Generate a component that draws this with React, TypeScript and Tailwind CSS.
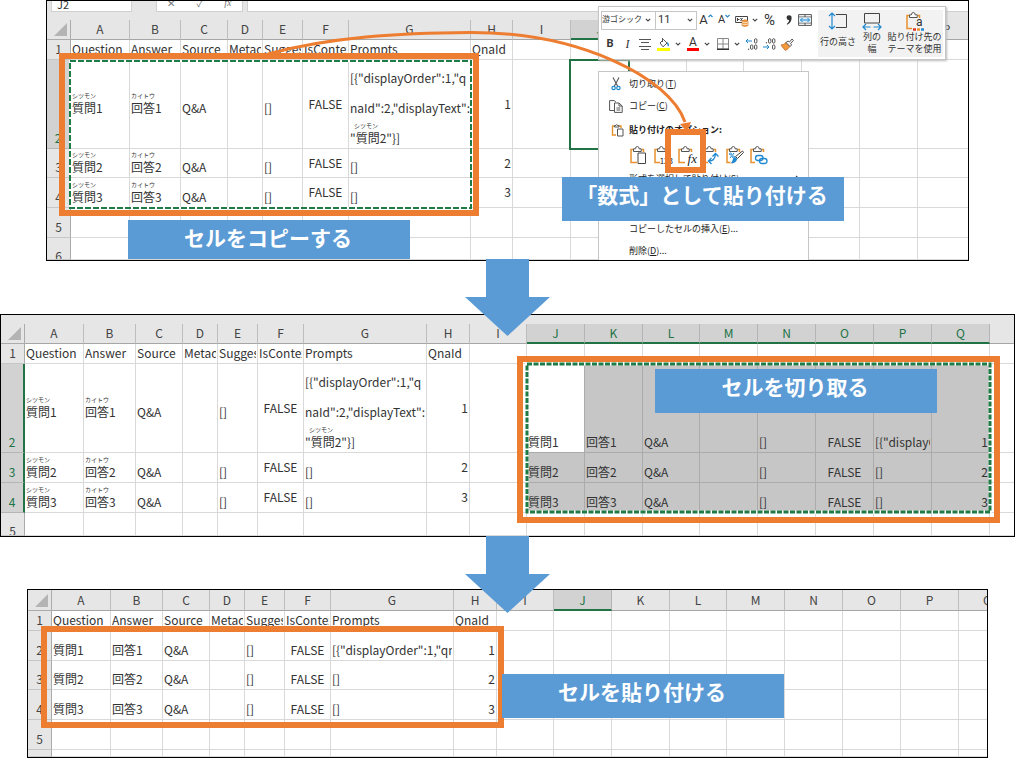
import type { ReactNode } from "react";

type Item = { t: string; ruby?: string; align?: "left" | "center" | "right"; phonetic?: boolean };
type Cell = Item | Item[] | undefined;
type Row = { n: number; h: number; cells: Cell[]; cut?: boolean };

const LETTERS = "ABCDEFGHIJKLMNOPQ".split("");

const TITLES: Item[] = ["Question", "Answer", "Source", "Metad", "Sugges", "IsContex", "Prompts", "QnaId"].map((t) => ({
  t,
}));

function phoneticCells(n: number): Cell[] {
  const prompts: Cell =
    n === 1
      ? [
          { t: '[{"displayOrder":1,"q', phonetic: true },
          { t: 'naId":2,"displayText":', phonetic: true },
          { t: '"質問2"}]', ruby: "シツモン", phonetic: true },
        ]
      : { t: "[]", phonetic: true };
  return [
    { t: `質問${n}`, ruby: "シツモン", phonetic: true },
    { t: `回答${n}`, ruby: "カイトウ", phonetic: true },
    { t: "Q&A", phonetic: true },
    undefined,
    { t: "[]", phonetic: true },
    { t: "FALSE", align: "center" },
    prompts,
    { t: String(n), align: "right" },
  ];
}

function plainCells(n: number, prompt: string): Cell[] {
  return [
    { t: `質問${n}` },
    { t: `回答${n}` },
    { t: "Q&A" },
    undefined,
    { t: "[]" },
    { t: "FALSE", align: "center" },
    { t: prompt },
    { t: String(n), align: "right" },
  ];
}

function Line({ item }: { item: Item }) {
  const side = item.align === "right" ? "text-right" : item.align === "center" ? "text-center" : "text-left";
  if (item.phonetic) {
    return (
      <div className="flex h-[30px] flex-col justify-center whitespace-nowrap">
        <span className={`h-2 text-[6px] leading-[8px] ${item.t.startsWith('"') ? "pl-1" : ""}`}>{item.ruby ?? ""}</span>
        <span className="leading-[16px]">{item.t}</span>
      </div>
    );
  }
  return <div className={`overflow-hidden pb-[2px] leading-[17px] whitespace-nowrap ${side}`}>{item.t}</div>;
}

type SheetProps = {
  label: string;
  widths: number[];
  headHeight: string;
  rows: Row[];
  selectedCols: string[];
  selectedRows: number[];
  highlight?: boolean;
};

function Sheet({ label, widths, headHeight, rows, selectedCols, selectedRows, highlight }: SheetProps) {
  return (
    <table aria-label={label} className="w-full table-fixed border-separate border-spacing-0 bg-white">
      <colgroup>
        {widths.map((w, i) => (
          <col key={i} style={{ width: w }} />
        ))}
        <col />
      </colgroup>
      <thead>
        <tr className={headHeight}>
          <th className="border-r border-b border-[#ababab] bg-[#e6e6e6] p-0 align-bottom">
            <svg viewBox="0 0 23 19" className="block h-[19px] w-[23px]" aria-hidden="true">
              <path d="M20 3V16H7Z" fill="#b4b4b4" />
            </svg>
          </th>
          {LETTERS.map((l) => (
            <th
              key={l}
              scope="col"
              className={
                selectedCols.includes(l)
                  ? "border-r border-b-2 border-r-[#b5b5b5] border-b-[#217346] bg-[#d2d2d2] p-0 align-bottom leading-[18px] font-normal text-[#217346]"
                  : "border-r border-b border-r-[#bdbdbd] border-b-[#a6a6a6] bg-[#e6e6e6] p-0 pb-px align-bottom leading-[18px] font-normal text-[#444]"
              }
            >
              {l}
            </th>
          ))}
          <th className="border-b border-[#a6a6a6] bg-[#e6e6e6] p-0" />
        </tr>
      </thead>
      <tbody>
        {rows.map((r) => {
          const sel = selectedRows.includes(r.n);
          return (
            <tr key={r.n} style={{ height: r.h }}>
              <th
                scope="row"
                className={
                  sel
                    ? "border-r-2 border-b border-r-[#217346] border-b-[#b5b5b5] bg-[#d2d2d2] p-0 align-bottom font-normal text-[#217346]"
                    : "border-r border-b border-r-[#ababab] border-b-[#c6c6c6] bg-[#e6e6e6] p-0 align-bottom font-normal text-[#444]"
                }
              >
                {r.cut ? (
                  <div className="overflow-hidden" style={{ height: r.h - 1 }}>
                    {r.h > 12 && <div className="pt-2 leading-[20px]">{r.n}</div>}
                  </div>
                ) : (
                  <div className="pb-[2px] leading-[17px]">{r.n}</div>
                )}
              </th>
              {LETTERS.map((l, i) => {
                const cell = r.cells[i];
                const list = cell ? (Array.isArray(cell) ? cell : [cell]) : [];
                const marked = highlight && sel && i >= 9;
                const shade = marked
                  ? l === "J" && r.n === 2
                    ? "bg-white border-[#ababab]"
                    : "bg-[#c6c6c6] border-[#ababab]"
                  : "border-[#d9d9d9]";
                const valign = sel || r.cells.some((c) => c && !Array.isArray(c) && c.phonetic);
                const pad = list[0]?.align === "center" ? "px-0" : "px-px";
                return (
                  <td
                    key={l}
                    className={`overflow-hidden border-r border-b py-0 ${pad} ${shade} ${valign && i < 9 ? "align-middle" : "align-bottom"}`}
                  >
                    <div className={list[0]?.phonetic ? "-my-1" : ""}>
                      {list.map((it, k) => (
                        <Line key={k} item={it} />
                      ))}
                    </div>
                  </td>
                );
              })}
              <td className="border-b border-[#d9d9d9] p-0" />
            </tr>
          );
        })}
      </tbody>
    </table>
  );
}

function Ants({ className, heavy }: { className: string; heavy?: boolean }) {
  return (
    <svg className={`absolute overflow-visible ${className}`} aria-hidden="true">
      <rect width="100%" height="100%" fill="none" stroke="#fff" strokeWidth={heavy ? 3 : 2} />
      <rect
        width="100%"
        height="100%"
        fill="none"
        stroke="#1e7b45"
        strokeWidth={heavy ? 3 : 2}
        strokeDasharray={heavy ? "5 1.5" : "6 2"}
      />
    </svg>
  );
}

function Caption({ className, children }: { className: string; children: ReactNode }) {
  return (
    <p
      className={`absolute w-[282px] bg-[#5b9bd5] pr-[2px] text-center text-[21px] leading-[35px] font-bold whitespace-nowrap text-white ${className}`}
    >
      {children}
    </p>
  );
}

function DownArrow({ className }: { className: string }) {
  return (
    <div className={`relative z-20 flex justify-center ${className}`}>
      <svg viewBox="0 0 85 77" className="block h-[77px] w-[85px]" aria-hidden="true">
        <path d="M21 0H64V38H85L42.5 77L0 38H21Z" fill="#5b9bd5" />
      </svg>
    </div>
  );
}

function Chevron() {
  return (
    <svg viewBox="0 0 6 4" className="h-1 w-[6px] shrink-0" aria-hidden="true">
      <path d="M.8.8L3 3L5.2.8" fill="none" stroke="#444" strokeWidth="1.1" />
    </svg>
  );
}

function Clipboard({ children }: { children?: ReactNode }) {
  return (
    <svg viewBox="0 0 20 20" className="block size-5" aria-hidden="true">
      <path d="M4 4.5H2V17.5H8M12.5 4.5H14.5V7" fill="none" stroke="#e8912d" strokeWidth="1.5" />
      <path d="M4.5 6.5V3.8H6.5Q6.5 1.5 8.3 1.5T10.1 3.8H12.2V6.5Z" fill="#fff" stroke="#555" strokeWidth="1" />
      {children}
    </svg>
  );
}

const toolButton = "flex h-5 items-center justify-center";

function MiniToolbar() {
  return (
    <div
      role="toolbar"
      aria-label="ミニ ツールバー"
      className="absolute top-[6px] left-[552px] z-10 flex h-[54px] w-[348px] border border-[#c6c6c6] bg-white pt-[3px] pr-[2px] pb-[2px] pl-[2px] font-['Roboto','Noto_Sans_CJK_JP',sans-serif] text-[#333] shadow-[1px_1px_2px_#bbb]"
    >
      <div className="flex w-[215px] flex-col gap-1">
        <div className="flex h-5 items-center">
          <div className="flex h-[19px] w-[55px] shrink-0 items-center border border-[#c6c6c6] pr-1">
            <select aria-label="フォント" className="min-w-0 flex-1 appearance-none bg-white text-[8px] outline-none">
              <option>游ゴシック</option>
            </select>
            <Chevron />
          </div>
          <div className="flex h-[19px] w-[41px] shrink-0 items-center border border-l-0 border-[#c6c6c6] pr-[3px] pl-[2px]">
            <select aria-label="フォント サイズ" className="min-w-0 flex-1 appearance-none bg-white text-[11px] outline-none">
              <option>11</option>
            </select>
            <Chevron />
          </div>
          <button aria-label="フォント サイズの拡大" className={`${toolButton} w-[18px] items-start text-[13px] leading-[20px]`}>
            A
            <svg viewBox="0 0 5 4" className="mt-1 h-1 w-[5px]" aria-hidden="true">
              <path d="M.5 3L2.5 1L4.5 3" fill="none" stroke="#2b88c8" strokeWidth="1.2" />
            </svg>
          </button>
          <button aria-label="フォント サイズの縮小" className={`${toolButton} w-[18px] text-[11px] leading-[20px]`}>
            A
            <svg viewBox="0 0 5 4" className="mb-2 h-1 w-[5px]" aria-hidden="true">
              <path d="M.5 1L2.5 3L4.5 1" fill="none" stroke="#2b88c8" strokeWidth="1.2" />
            </svg>
          </button>
          <button aria-label="通貨表示形式" className={`${toolButton} w-[26px] gap-[3px]`}>
            <svg viewBox="0 0 14 13" className="h-[13px] w-[14px] shrink-0" aria-hidden="true">
              <path d="M.6 2.5H12.5V8.5H.6Z" fill="#fff" stroke="#444" />
              <path d="M2.5 4V7M2.5 5.5H4.5M5.5 4L7.5 7M7.5 4L5.5 7" stroke="#444" />
              <path d="M7 7Q10 4.5 13 7V11.5Q10 13.5 7 11.5Z" fill="#f09a3e" stroke="#d9782d" strokeWidth=".7" />
              <path d="M7 8Q10 9.6 13 8M7 10Q10 11.6 13 10" fill="none" stroke="#fff" strokeWidth=".7" />
            </svg>
            <Chevron />
          </button>
          <button aria-label="パーセント スタイル" className={`${toolButton} w-[21px] text-[15px]`}>
            %
          </button>
          <button aria-label="桁区切りスタイル" className={`${toolButton} w-[17px]`}>
            <svg viewBox="0 0 8 12" className="h-3 w-2" aria-hidden="true">
              <path d="M4 1.2A2.6 2.6 0 0 1 6.6 4Q6.6 8.5 2.2 10.7L1.8 10Q4.2 8 4.2 6.2A2.5 2.5 0 1 1 4 1.2Z" fill="#333" />
            </svg>
          </button>
          <button aria-label="セルを結合して中央揃え" className={`${toolButton} w-[16px]`}>
            <svg viewBox="0 0 14 12" className="h-3 w-[14px]" aria-hidden="true">
              <path d="M.6.6H13.4V11.4H.6ZM.6 3H13.4M.6 9H13.4M7 .6V3M7 9V11.4" fill="none" stroke="#555" />
              <path d="M1.2 3.5H12.8V8.5H1.2Z" fill="#dceefa" />
              <path d="M2.5 6H11.5M4.5 4L2.5 6L4.5 8M9.5 4L11.5 6L9.5 8" fill="none" stroke="#1e88d0" />
            </svg>
          </button>
        </div>
        <div className="flex h-5 items-center">
          <button className={`${toolButton} w-[18px] text-[11px] font-bold`}>B</button>
          <button className={`${toolButton} w-[17px] font-['Liberation_Serif',serif] text-[12px] italic`}>I</button>
          <button aria-label="中央揃え" className={`${toolButton} w-[18px]`}>
            <svg viewBox="0 0 12 11" className="h-[11px] w-3" aria-hidden="true">
              <path d="M0 .5H12M2 3.5H10M0 7.5H12M2 10.5H10" stroke="#555" />
            </svg>
          </button>
          <button aria-label="塗りつぶしの色" className={`${toolButton} w-[30px] gap-[5px]`}>
            <svg viewBox="0 0 13 13" className="size-[13px] shrink-0" aria-hidden="true">
              <path d="M3 5L6.5 1.5L10 5L6 8.8Z" fill="#fff" stroke="#555" />
              <path d="M5.5 0V4" stroke="#555" />
              <path d="M10 4Q13 6 11.5 8.5Q10 8 10 4" fill="#2b88c8" />
              <path d="M0 10H13V13H0Z" fill="#ff0" />
            </svg>
            <Chevron />
          </button>
          <button aria-label="フォントの色" className={`${toolButton} w-[29px] gap-[5px]`}>
            <span className="border-b-3 border-[#f00] px-[2px] text-[12px] leading-[11px]">A</span>
            <Chevron />
          </button>
          <button aria-label="罫線" className={`${toolButton} w-[30px] gap-[5px]`}>
            <svg viewBox="0 0 12 12" className="size-3 shrink-0" aria-hidden="true">
              <path d="M.5.5H11.5V11H.5ZM6 .5V11M.5 6H11.5" fill="none" stroke="#888" />
              <path d="M0 11.3H12" stroke="#333" strokeWidth="1.4" />
            </svg>
            <Chevron />
          </button>
          <button aria-label="小数点以下の表示桁数を増やす" className={`${toolButton} w-[17px]`}>
            <svg viewBox="0 0 13 12" className="h-3 w-[13px]" aria-hidden="true">
              <path d="M1 3H7M3 1L1 3L3 5" fill="none" stroke="#1e88d0" />
              <rect x="9.5" y=".7" width="2.4" height="4.4" rx="1.2" fill="none" stroke="#555" />
              <rect x="5.5" y="6.9" width="2.4" height="4.4" rx="1.2" fill="none" stroke="#555" />
              <rect x="9.5" y="6.9" width="2.4" height="4.4" rx="1.2" fill="none" stroke="#555" />
              <circle cx="3.6" cy="11.2" r=".7" fill="#555" />
            </svg>
          </button>
          <button aria-label="小数点以下の表示桁数を減らす" className={`${toolButton} w-[18px]`}>
            <svg viewBox="0 0 13 12" className="h-3 w-[13px]" aria-hidden="true">
              <path d="M0 9H6M4 7L6 9L4 11" fill="none" stroke="#1e88d0" />
              <rect x="5.5" y=".7" width="2.4" height="4.4" rx="1.2" fill="none" stroke="#555" />
              <rect x="9.5" y=".7" width="2.4" height="4.4" rx="1.2" fill="none" stroke="#555" />
              <rect x="9.5" y="6.9" width="2.4" height="4.4" rx="1.2" fill="none" stroke="#555" />
              <circle cx="3.4" cy="4.8" r=".7" fill="#555" />
            </svg>
          </button>
          <button aria-label="書式のコピー/貼り付け" className={`${toolButton} w-[18px]`}>
            <svg viewBox="0 0 14 13" className="h-[13px] w-[14px]" aria-hidden="true">
              <path d="M1 7Q4 7 6 4.5L10 8.5Q8 11 5.5 12.5Q4 11.5 1 7Z" fill="#f09a3e" stroke="#c8641e" strokeWidth=".8" />
              <path d="M6 4.5L8 3L9.5 4L12 1L13.4 2.4L10.7 5.5L11.5 7L10 8.5Z" fill="#fff" stroke="#444" strokeWidth=".9" />
            </svg>
          </button>
        </div>
      </div>
      <div className="ml-[2px] flex flex-1 bg-[#f2f2f2] text-[9px] leading-[12px]">
        <button className="flex w-[40px] flex-col items-center pt-px whitespace-nowrap">
          <svg viewBox="0 0 20 20" className="block size-5 shrink-0" aria-hidden="true">
            <path d="M4 2V18M1 5L4 2L7 5M1 15L4 18L7 15" fill="none" stroke="#1e88d0" strokeWidth="1.2" />
            <path d="M8 3.5H18.5V16.5H8" fill="none" stroke="#444" />
          </svg>
          <span className="pt-[5px]">行の高さ</span>
        </button>
        <button className="flex w-[28px] flex-col items-center pt-px">
          <svg viewBox="0 0 20 20" className="block size-5 shrink-0" aria-hidden="true">
            <path d="M2.5 12V2.5H17.5V12Z" fill="none" stroke="#444" />
            <path d="M1 16H19M4 13L1 16L4 19M16 13L19 16L16 19" fill="none" stroke="#1e88d0" strokeWidth="1.2" />
            <path d="M8.5 16H11.5" stroke="#f2f2f2" strokeWidth="2" />
          </svg>
          <span>列の</span>
          <span>幅</span>
        </button>
        <button className="flex flex-1 flex-col items-center pt-px whitespace-nowrap">
          <span className="relative block size-5 shrink-0">
            <Clipboard>
              <path d="M7 8H19V19H7Z" fill="#f2f2f2" />
              <path d="M8 18.5H11" stroke="#e03020" strokeWidth="2.4" />
              <path d="M12 18.5H15" stroke="#e8912d" strokeWidth="2.4" />
              <path d="M16 18.5H19" stroke="#1e88d0" strokeWidth="2.4" />
            </Clipboard>
            <span className="absolute top-[5px] right-[2px] text-[12px]">a</span>
          </span>
          <span>貼り付け先の</span>
          <span>テーマを使用</span>
        </button>
      </div>
    </div>
  );
}

const menuItem = "flex h-[22px] w-full shrink-0 items-center text-left whitespace-nowrap";

function ContextMenu() {
  return (
    <div
      role="menu"
      aria-label="セルのメニュー"
      className="absolute top-[71px] left-[552px] flex h-[189px] w-[211px] flex-col overflow-hidden border border-b-0 border-[#c6c6c6] bg-white pt-px text-[9px] text-[#222]"
    >
      <button role="menuitem" className={menuItem}>
        <span className="flex w-[30px] justify-center">
          <svg viewBox="0 0 10 14" className="ml-1 h-[14px] w-[10px]" aria-hidden="true">
            <path d="M2 .5L6.8 9.5M8 .5L3.2 9.5" stroke="#555" strokeWidth="1.1" />
            <circle cx="2.6" cy="11" r="1.7" fill="none" stroke="#1e88d0" strokeWidth="1.2" />
            <circle cx="7.4" cy="11" r="1.7" fill="none" stroke="#1e88d0" strokeWidth="1.2" />
          </svg>
        </span>
        切り取り(<u>T</u>)
      </button>
      <button role="menuitem" className={menuItem}>
        <span className="flex w-[30px] justify-center">
          <svg viewBox="0 0 14 13" className="ml-1 h-[13px] w-[14px]" aria-hidden="true">
            <path d="M5 10.5H.6V.6H5.2L7 2.2" fill="none" stroke="#555" />
            <path d="M5.5 3H10L13.2 6V12.4H5.5ZM10 3V6H13.2M7.5 8H11.3M7.5 10H11.3" fill="none" stroke="#555" />
          </svg>
        </span>
        コピー(<u>C</u>)
      </button>
      <div className="flex h-[25px] shrink-0 items-center font-bold whitespace-nowrap">
        <span className="flex w-[30px] justify-center">
          <svg viewBox="0 0 14 14" className="ml-2 size-[14px]" aria-hidden="true">
            <path d="M3.5 3H1.5V12H5M8 3H10V5" fill="none" stroke="#e8912d" strokeWidth="1.4" />
            <path d="M3.5 4V2.5H5Q5.8 .4 6.6 2.5H8V4Z" fill="#fff" stroke="#555" />
            <path d="M6.5 6H12V13H6.5Z" fill="#fff" stroke="#555" />
          </svg>
        </span>
        貼り付けのオプション:
      </div>
      <div className="flex h-[26px] shrink-0 items-center gap-1 pl-[30px]">
        <button role="menuitem" aria-label="貼り付け">
          <Clipboard>
            <path d="M9 8H16.5V18.5H9Z" fill="#fff" stroke="#444" />
          </Clipboard>
        </button>
        <button role="menuitem" aria-label="値" className="relative">
          <Clipboard />
          <span className="absolute right-0 bottom-0 bg-white text-[8px] leading-[9px]">123</span>
        </button>
        <button role="menuitem" aria-label="数式" className="relative">
          <Clipboard />
          <span className="absolute right-0 bottom-0 bg-white font-['Liberation_Serif',serif] text-[13px] leading-[13px] italic">
            fx
          </span>
        </button>
        <button role="menuitem" aria-label="行/列の入れ替え">
          <Clipboard>
            <path d="M7 16H14V9" fill="none" stroke="#fff" strokeWidth="5" />
            <path d="M8 16Q14 16 14.5 9M11.5 11.5L14.5 8.5L17.5 11.5M10.5 13L7.5 16L10.5 19" fill="none" stroke="#1e88d0" strokeWidth="1.3" />
          </Clipboard>
        </button>
        <button role="menuitem" aria-label="書式設定">
          <Clipboard>
            <path d="M5 18L10 11L18 5L19 7L13 14Q10 19 5 18Z" fill="#fff" />
            <path d="M17.5 6L10.5 11.5L12.5 13.5L18.5 7.5Z" fill="#fff" stroke="#444" />
            <path d="M10 12Q7.5 13 7.5 15.5Q7 17.5 5.5 18Q10 19.5 12.3 14Z" fill="#1e88d0" />
            <circle cx="5.5" cy="9" r="1" fill="none" stroke="#1e88d0" />
            <circle cx="8.5" cy="12" r="1" fill="none" stroke="#1e88d0" />
            <path d="M9 8L5 13" stroke="#1e88d0" />
          </Clipboard>
        </button>
        <button role="menuitem" aria-label="リンク貼り付け">
          <Clipboard>
            <path d="M6 10H19V19H6Z" fill="#fff" />
            <rect x="6.5" y="10.5" width="7.5" height="5" rx="2.5" fill="none" stroke="#1e88d0" strokeWidth="1.3" />
            <rect x="10.5" y="13.5" width="7.5" height="5" rx="2.5" fill="none" stroke="#1e88d0" strokeWidth="1.3" />
          </Clipboard>
        </button>
      </div>
      <button role="menuitem" className={`${menuItem} justify-between pr-2 pl-[30px]`}>
        <span>
          形式を選択して貼り付け(<u>S</u>)
        </span>
        <svg viewBox="0 0 5 8" className="h-2 w-[5px]" aria-hidden="true">
          <path d="M1 1L4 4L1 7" fill="none" stroke="#444" strokeWidth="1.2" />
        </svg>
      </button>
      <button role="menuitem" className={`${menuItem} mt-7 pl-[30px]`}>
        コピーしたセルの挿入(<u>E</u>)...
      </button>
      <button role="menuitem" className={`${menuItem} pl-[30px]`}>
        削除(<u>D</u>)...
      </button>
    </div>
  );
}

const WIDE = [58, 58, 57, 58, 58, 58, 58, 58];

export default function App() {
  return (
    <main className="min-h-screen overflow-hidden bg-white font-['Noto_Sans_CJK_JP',sans-serif] text-[12px] text-[#333]">
      <section className="relative mx-[46px]">
        <div className="overflow-hidden border border-black">
          <div className="flex h-[11px] overflow-hidden bg-[#e6e6e6] pl-1">
            <input
              aria-label="名前ボックス"
              defaultValue="J2"
              className="h-[11px] w-[81px] border-x border-b border-[#d0d0d0] bg-white px-[5px] pb-1 text-[11px] leading-[8px] outline-none"
            />
            <div className="ml-6 flex w-[87px] justify-around border-x border-b border-[#d0d0d0] bg-white text-[10px] leading-[4px] text-[#777]">
              <span>✕</span>
              <span>✓</span>
              <i className="font-['Liberation_Serif',serif]">fx</i>
            </div>
            <div className="ml-1 flex-1 border-b border-l border-[#d0d0d0] bg-white" />
          </div>
          <div className="h-2 bg-[#e6e6e6]" />
          <Sheet
            label="コピー元のシート"
            widths={[24, 59, 51, 47, 35, 40, 46, 122, 42, 58, ...WIDE]}
            headHeight="h-5"
            selectedCols={["J"]}
            selectedRows={[2]}
            rows={[
              { n: 1, h: 20, cells: TITLES },
              { n: 2, h: 89, cells: phoneticCells(1) },
              { n: 3, h: 29, cells: phoneticCells(2) },
              { n: 4, h: 30, cells: phoneticCells(3) },
              { n: 5, h: 30, cells: [] },
              { n: 6, h: 22, cells: [], cut: true },
            ]}
          />
        </div>
        <div className="absolute top-[59px] left-[523px] h-[91px] w-[61px] border-2 border-[#217346]" />
        <Ants className="top-[61px] left-[24px] h-[147px] w-[401px]" />
        <ContextMenu />
        <MiniToolbar />
        <svg viewBox="0 0 700 140" className="pointer-events-none absolute top-0 left-0 z-10 h-[140px] w-[700px]" aria-hidden="true">
          <path d="M222 54C284 37 354 33 424 32.5C534 32 624 78 639 122" fill="none" stroke="#ed7d31" strokeWidth="3" />
          <path d="M634 124L645 122L641 132Z" fill="#ed7d31" />
        </svg>
        <div className="absolute top-[53px] left-[13px] z-10 h-[163px] w-[420px] border-6 border-[#ed7d31]" />
        <div className="absolute top-[129px] left-[619px] z-10 h-[44px] w-[41px] border-6 border-[#ed7d31]" />
        <Caption className="top-[220px] left-[82px] h-[39px]">セルをコピーする</Caption>
        <Caption className="top-[177px] left-[516px] h-[44px]">「数式」として貼り付ける</Caption>
      </section>

      <DownArrow className="-mt-[2px] -mb-[22px]" />

      <section className="relative">
        <div className="overflow-hidden border border-black">
          <div className="h-[9px] bg-[#e6e6e6]" />
          <Sheet
            label="切り取るシート"
            widths={[24, 59, 52, 47, 35, 40, 46, 123, 43, 57, ...WIDE]}
            headHeight="h-5"
            selectedCols={["J", "K", "L", "M", "N", "O", "P", "Q"]}
            selectedRows={[2, 3, 4]}
            highlight
            rows={[
              { n: 1, h: 20, cells: TITLES },
              { n: 2, h: 89, cells: [...phoneticCells(1), undefined, ...plainCells(1, '[{"displayO')] },
              { n: 3, h: 30, cells: [...phoneticCells(2), undefined, ...plainCells(2, "[]")] },
              { n: 4, h: 30, cells: [...phoneticCells(3), undefined, ...plainCells(3, "[]")] },
              { n: 5, h: 23, cells: [], cut: true },
            ]}
          />
        </div>
        <Ants heavy className="top-[50px] left-[527px] h-[148px] w-[463px]" />
        <div className="absolute top-[42px] left-[517px] h-[167px] w-[483px] border-6 border-[#ed7d31]" />
        <Caption className="top-[55px] left-[655px] h-[44px]">セルを切り取る</Caption>
      </section>

      <DownArrow className="-mt-[1px] -mb-[24px]" />

      <section className="relative mx-[27px]">
        <div className="overflow-hidden border border-black">
          <Sheet
            label="貼り付け先のシート"
            widths={[24, 59, 52, 47, 35, 40, 46, 123, 43, 57, ...WIDE]}
            headHeight="h-[21px]"
            selectedCols={["J"]}
            selectedRows={[]}
            rows={[
              { n: 1, h: 20, cells: TITLES },
              { n: 2, h: 30, cells: plainCells(1, '[{"displayOrder":1,"qn') },
              { n: 3, h: 29, cells: plainCells(2, "[]") },
              { n: 4, h: 30, cells: plainCells(3, "[]") },
              { n: 5, h: 30, cells: [] },
              { n: 6, h: 7, cells: [], cut: true },
            ]}
          />
        </div>
        <div className="absolute top-[37px] left-[14px] h-[102px] w-[463px] border-6 border-[#ed7d31]" />
        <Caption className="top-[85px] left-[475px] h-[44px]">セルを貼り付ける</Caption>
      </section>
    </main>
  );
}
